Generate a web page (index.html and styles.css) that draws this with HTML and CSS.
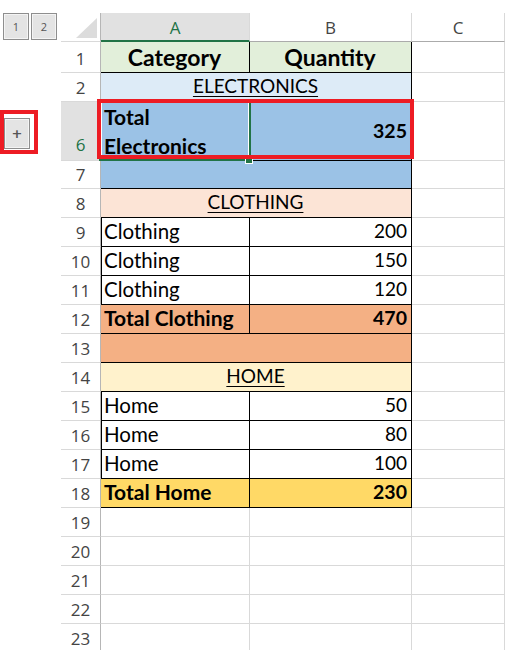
FILE: index.html
```html
<!DOCTYPE html>
<html>
<head>
<meta charset="utf-8">
<link rel="stylesheet" href="styles.css">
</head>
<body>
<div class="sheet">
  <div class="row hdr">
    <div class="gutter levels"><span class="lvl">1</span><span class="lvl">2</span></div>
    <div class="corner"></div>
    <div class="colh a sel">A</div>
    <div class="colh b">B</div>
    <div class="colh c">C</div>
  </div>
  <div class="row r1">
    <div class="gutter"></div>
    <div class="rh">1</div>
    <div class="cell a tb mid bold big f-green">Category</div>
    <div class="cell b tb mid bold big f-green">Quantity</div>
    <div class="cell c"></div>
  </div>
  <div class="row">
    <div class="gutter"></div>
    <div class="rh">2</div>
    <div class="cell ab tb mid u f-lblue">ELECTRONICS</div>
    <div class="cell c"></div>
  </div>
  <div class="row r6">
    <div class="gutter grp"><div class="mark"><span class="expand">+</span></div></div>
    <div class="rh rsel">6</div>
    <div class="cell a tb bold wrap f-blue">Total Electronics</div>
    <div class="cell b tb num bold vmid f-blue">325</div>
    <div class="cell c"></div>
    <div class="selection"></div>
    <div class="handle"></div>
    <div class="highlight"></div>
  </div>
  <div class="row r7">
    <div class="gutter"></div>
    <div class="rh">7</div>
    <div class="cell ab tb f-blue"></div>
    <div class="cell c"></div>
  </div>
  <div class="row">
    <div class="gutter"></div>
    <div class="rh">8</div>
    <div class="cell ab tb mid u f-peach">CLOTHING</div>
    <div class="cell c"></div>
  </div>
  <div class="row">
    <div class="gutter"></div>
    <div class="rh">9</div>
    <div class="cell a tb lb">Clothing</div>
    <div class="cell b tb num">200</div>
    <div class="cell c"></div>
  </div>
  <div class="row">
    <div class="gutter"></div>
    <div class="rh">10</div>
    <div class="cell a tb lb">Clothing</div>
    <div class="cell b tb num">150</div>
    <div class="cell c"></div>
  </div>
  <div class="row">
    <div class="gutter"></div>
    <div class="rh">11</div>
    <div class="cell a tb lb">Clothing</div>
    <div class="cell b tb num">120</div>
    <div class="cell c"></div>
  </div>
  <div class="row">
    <div class="gutter"></div>
    <div class="rh">12</div>
    <div class="cell a tb bold f-orange">Total Clothing</div>
    <div class="cell b tb num bold f-orange">470</div>
    <div class="cell c"></div>
  </div>
  <div class="row">
    <div class="gutter"></div>
    <div class="rh">13</div>
    <div class="cell ab tb f-orange"></div>
    <div class="cell c"></div>
  </div>
  <div class="row">
    <div class="gutter"></div>
    <div class="rh">14</div>
    <div class="cell ab tb mid u f-cream">HOME</div>
    <div class="cell c"></div>
  </div>
  <div class="row">
    <div class="gutter"></div>
    <div class="rh">15</div>
    <div class="cell a tb lb">Home</div>
    <div class="cell b tb num">50</div>
    <div class="cell c"></div>
  </div>
  <div class="row">
    <div class="gutter"></div>
    <div class="rh">16</div>
    <div class="cell a tb lb">Home</div>
    <div class="cell b tb num">80</div>
    <div class="cell c"></div>
  </div>
  <div class="row">
    <div class="gutter"></div>
    <div class="rh">17</div>
    <div class="cell a tb lb">Home</div>
    <div class="cell b tb num">100</div>
    <div class="cell c"></div>
  </div>
  <div class="row">
    <div class="gutter"></div>
    <div class="rh">18</div>
    <div class="cell a tb bold f-yellow">Total Home</div>
    <div class="cell b tb num bold f-yellow">230</div>
    <div class="cell c"></div>
  </div>
  <div class="row">
    <div class="gutter"></div>
    <div class="rh">19</div>
    <div class="cell a"></div>
    <div class="cell b"></div>
    <div class="cell c"></div>
  </div>
  <div class="row">
    <div class="gutter"></div>
    <div class="rh">20</div>
    <div class="cell a"></div>
    <div class="cell b"></div>
    <div class="cell c"></div>
  </div>
  <div class="row">
    <div class="gutter"></div>
    <div class="rh">21</div>
    <div class="cell a"></div>
    <div class="cell b"></div>
    <div class="cell c"></div>
  </div>
  <div class="row">
    <div class="gutter"></div>
    <div class="rh">22</div>
    <div class="cell a"></div>
    <div class="cell b"></div>
    <div class="cell c"></div>
  </div>
  <div class="row">
    <div class="gutter"></div>
    <div class="rh">23</div>
    <div class="cell a"></div>
    <div class="cell b"></div>
    <div class="cell c"></div>
  </div>
</div>
</body>
</html>
```
FILE: styles.css
```css
html, body {
  margin: 0;
  background: #ffffff;
  overflow: hidden;
}
body {
  font-family: Lato, "Liberation Sans", sans-serif;
  color: #000;
}
.sheet {
  padding-top: 13px;
  width: 505px;
}
.row {
  display: flex;
  height: 29px;
}
.row > div {
  box-sizing: border-box;
}
.hdr { height: 29px; }
.r1 { height: 31px; }
.r6 { height: 59px; position: relative; }
.r7 { height: 28px; }

.gutter {
  width: 61px;
  flex: none;
}
.levels {
  display: flex;
  gap: 2px;
  padding: 0 0 2px 3px;
}
.lvl {
  width: 26px;
  box-sizing: border-box;
  border: 1px solid #8e8e8e;
  box-shadow: inset 0 0 0 1px #f4f4f4;
  background: #e4e4e4;
  font-family: "Open Sans", sans-serif;
  font-size: 11px;
  color: #555;
  display: flex;
  align-items: center;
  justify-content: center;
}
.grp {
  display: flex;
  align-items: center;
}
.mark {
  width: 38px;
  height: 44px;
  box-sizing: border-box;
  border: 4px solid #ed1c24;
  padding: 4px 4px 1px 0;
  margin-top: 1px;
}
.expand {
  display: flex;
  width: 100%;
  height: 100%;
  box-sizing: border-box;
  border: 1px solid #8e8e8e;
  box-shadow: inset 0 0 0 1px #f4f4f4;
  background: #e4e4e4;
  align-items: center;
  justify-content: center;
  font-family: "DejaVu Sans", sans-serif;
  font-weight: 700;
  font-size: 13px;
  color: #555;
}

.corner {
  width: 40px;
  flex: none;
  position: relative;
  border-right: 1px solid #b6b6b6;
  border-bottom: 1px solid #d9d9d9;
}
.corner::after {
  content: "";
  position: absolute;
  left: 15px;
  top: 5px;
  width: 21px;
  height: 20px;
  background: #dcdcdc;
  clip-path: polygon(100% 0, 100% 100%, 0 100%);
}
.colh {
  display: flex;
  justify-content: center;
  align-items: flex-end;
  padding-bottom: 3px;
  border-right: 1px solid #d9d9d9;
  border-bottom: 1px solid #ababab;
  font-family: "Open Sans", sans-serif;
  font-size: 17px;
  line-height: 20px;
  color: #444;
}
.colh.sel {
  background: #e1e1e1;
  color: #217346;
  border-bottom: 2px solid #217346;
  padding-bottom: 2px;
}
.rh {
  width: 40px;
  flex: none;
  display: flex;
  justify-content: center;
  align-items: flex-end;
  padding-bottom: 3px;
  border-right: 1px solid #b6b6b6;
  border-bottom: 1px solid #d9d9d9;
  font-family: "Open Sans", sans-serif;
  font-size: 17px;
  line-height: 20px;
  color: #444;
}
.rh.rsel {
  background: #e1e1e1;
  color: #217346;
  padding-bottom: 5px;
}

.cell {
  display: flex;
  align-items: flex-end;
  padding: 0 4px 5px 3px;
  border-right: 1px solid #d9d9d9;
  border-bottom: 1px solid #d9d9d9;
  font-size: 20.5px;
  line-height: 20px;
  white-space: nowrap;
}
.a { width: 149px; flex: none; }
.b { width: 162px; flex: none; }
.ab { width: 311px; flex: none; }
.c { flex: 1; }
.tb { border-right-color: #000; border-bottom-color: #000; }
.lb { border-left: 1px solid #000; padding-left: 2px; }
.num { justify-content: flex-end; font-size: 19px; }
.mid { justify-content: center; }
.bold { font-weight: 700; font-size: 21px; }
.num.bold { font-size: 19.5px; }
.big { font-size: 23px; }
.u { text-decoration: underline; text-underline-offset: 3px; font-size: 19px; }
.wrap {
  white-space: normal;
  line-height: 29px;
  padding-bottom: 0;
  padding-right: 10px;
}
.vmid { align-items: center; padding-bottom: 0; }

.f-green { background: #e2efda; }
.f-lblue { background: #ddebf7; }
.f-blue { background: #9bc2e6; }
.f-peach { background: #fce4d6; }
.f-orange { background: #f4b084; }
.f-cream { background: #fff2cc; }
.f-yellow { background: #ffd966; }

.selection {
  position: absolute;
  left: 99px;
  top: -2px;
  width: 152px;
  height: 61px;
  border: 2px solid #217346;
  box-shadow: inset 0 0 0 1px #ffffff;
}
.handle {
  position: absolute;
  left: 245px;
  top: 54px;
  width: 8px;
  height: 8px;
  background: #217346;
  border: 1px solid #ffffff;
}
.highlight {
  position: absolute;
  left: 97px;
  top: -3px;
  width: 317px;
  height: 60px;
  border: 4px solid #ed1c24;
}
```
